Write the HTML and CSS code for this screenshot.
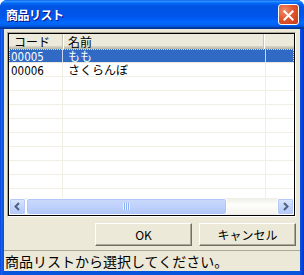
FILE: index.html
```html
<!DOCTYPE html>
<html lang="ja">
<head>
  <meta charset="UTF-8" />
  <title>商品リスト</title>
  <link rel="stylesheet" href="styles.css">
</head>
<body>
  <div class="window">
    <div class="titlebar">
      <span class="title">商品リスト</span>
      <span class="close">
        <svg width="21" height="21" viewBox="0 0 21 21">
          <path d="M6 6 L15 15 M15 6 L6 15" stroke="#fff" stroke-width="2.2" stroke-linecap="square" />
        </svg>
      </span>
    </div>

    <div class="client">
      <!-- list view -->
      <div class="listview">
        <div class="list-inner">
          <div class="grid">
            <div class="row head">
              <div class="cell c1">コード</div>
              <div class="cell c2">名前</div>
              <div class="cell c3"></div>
            </div>
            <div class="row selected">
              <div class="cell c1"><span class="num">00005</span></div>
              <div class="cell c2">もも</div>
              <div class="cell c3"></div>
            </div>
            <div class="row">
              <div class="cell c1"><span class="num">00006</span></div>
              <div class="cell c2">さくらんぼ</div>
              <div class="cell c3"></div>
            </div>
            <div class="row"><div class="cell c1"></div><div class="cell c2"></div><div class="cell c3"></div></div>
            <div class="row"><div class="cell c1"></div><div class="cell c2"></div><div class="cell c3"></div></div>
            <div class="row"><div class="cell c1"></div><div class="cell c2"></div><div class="cell c3"></div></div>
            <div class="row"><div class="cell c1"></div><div class="cell c2"></div><div class="cell c3"></div></div>
            <div class="row"><div class="cell c1"></div><div class="cell c2"></div><div class="cell c3"></div></div>
            <div class="row"><div class="cell c1"></div><div class="cell c2"></div><div class="cell c3"></div></div>
            <div class="row"><div class="cell c1"></div><div class="cell c2"></div><div class="cell c3"></div></div>
            <div class="row"><div class="cell c1"></div><div class="cell c2"></div><div class="cell c3"></div></div>
            <div class="row"><div class="cell c1"></div><div class="cell c2"></div><div class="cell c3"></div></div>
          </div>

          <div class="hscroll">
            <span class="sbtn">
              <svg width="15" height="15" viewBox="0 0 15 15"><path d="M9 4 L5.5 7.5 L9 11" fill="none" stroke="#4D6185" stroke-width="2" /></svg>
            </span>
            <span class="track">
              <span class="thumb"><span class="grip"></span></span>
            </span>
            <span class="sbtn">
              <svg width="15" height="15" viewBox="0 0 15 15"><path d="M6 4 L9.5 7.5 L6 11" fill="none" stroke="#4D6185" stroke-width="2" /></svg>
            </span>
          </div>
        </div>
      </div>

      <div class="buttons">
        <span class="btn">OK</span>
        <span class="btn">キャンセル</span>
      </div>

      <div class="status">商品リストから選択してください。</div>
    </div>
  </div>
</body>
</html>
```

FILE: styles.css
```css
body {
  margin: 0;
  background: #fff;
  font: 12px "Noto Sans CJK JP", "Liberation Sans", sans-serif;
}

.window {
  width: 304px;
  height: 275px;
  box-sizing: border-box;
  display: flex;
  flex-direction: column;
  background: linear-gradient(to right, #0831D9 0, #166AEE 1px, #0855DD 3px, #0855DD 300px, #0831D9 304px);
  padding: 0 4px 4px;
  border-radius: 7px 7px 0 0;
}

/* title bar */
.titlebar {
  height: 30px;
  margin: 0 -4px;
  padding: 0 5px 0 6px;
  display: flex;
  align-items: center;
  justify-content: space-between;
  border-radius: 7px 7px 0 0;
  background: linear-gradient(
    to bottom,
    #0058EE 0%,
    #3593FF 4%,
    #288EFF 6%,
    #127DFF 8%,
    #036FFC 10%,
    #0262EE 14%,
    #0057E5 20%,
    #0054E3 24%,
    #0055EB 56%,
    #005BF5 66%,
    #026AFE 76%,
    #0062EF 86%,
    #0052D6 92%,
    #0040AB 94%,
    #003092 100%
  );
}

.title {
  color: #fff;
  font-weight: bold;
  font-size: 12px;
  letter-spacing: -0.5px;
  text-shadow: 1px 1px 0 #0F1089;
}

.close {
  width: 21px;
  height: 21px;
  box-sizing: border-box;
  border: 1px solid #fff;
  border-radius: 3px;
  background: radial-gradient(circle at 30% 30%, #F0906E 0%, #E0572F 45%, #C43A15 100%);
  display: flex;
}

/* client area */
.client {
  flex: 1;
  background: #ECE9D8;
  display: flex;
  flex-direction: column;
  padding: 3px 4px 0 3px;
}

.listview {
  height: 185px;
  box-sizing: border-box;
  border: 1px solid;
  border-color: #ACA899 #fff #fff #ACA899;
}

.list-inner {
  height: 100%;
  box-sizing: border-box;
  border: 1px solid #000;
  background: #fff;
  display: flex;
  flex-direction: column;
}

.grid {
  flex: 1;
  overflow: hidden;
}

.row {
  display: flex;
  height: 13px;
  line-height: 13px;
  border-bottom: 1px solid #F1EFE2;
}

.cell {
  padding-left: 2px;
  border-right: 1px solid #F1EFE2;
  white-space: nowrap;
}

.c1 { width: 51px; }
.c2 { width: 197px; padding-left: 5px; }
.c3 { flex: 1; border-right: 0; }

.num {
  font-family: "DejaVu Sans Condensed", "Liberation Sans Narrow", sans-serif;
  font-size: 11.5px;
}

.row.head {
  height: 15px;
  line-height: 15px;
  background: #EBEADB;
  border-bottom: 0;
  box-shadow: inset 0 -1px 0 #C1BCA7, inset 0 -2px 0 #CBC7B8, inset 0 -3px 0 #D6D2C2;
}

.row.head .cell {
  border-right: 1px solid #C7C5B2;
  box-shadow: 1px 0 0 #fff;
  padding-left: 5px;
}

.row.head .c1 { width: 48px; }
.row.head .c2 { width: 195px; }
.row.head .c3 { border-right: 0; box-shadow: none; }

.row.selected {
  background: #316AC5;
  color: #fff;
  outline: 1px dotted #D7E1F2;
  outline-offset: -1px;
}

.row.selected .cell {
  border-right-color: #C9D6EE;
}

/* horizontal scrollbar */
.hscroll {
  height: 17px;
  display: flex;
  background: linear-gradient(to bottom, #EEEDE5, #FEFEFB 40%, #F3F1EC);
}

.sbtn {
  width: 17px;
  height: 17px;
  box-sizing: border-box;
  border: 1px solid #fff;
  border-radius: 2px;
  background: linear-gradient(to bottom, #DDE7FE, #C1D3FB 60%, #B4C8F6);
  box-shadow: inset 0 0 0 1px #B5CAF8;
  display: flex;
  align-items: center;
  justify-content: center;
}

.track {
  flex: 1;
  display: flex;
}

.thumb {
  width: 201px;
  box-sizing: border-box;
  border: 1px solid #fff;
  border-radius: 3px;
  background: linear-gradient(to bottom, #CBDAFC, #BCCFFB 60%, #B1C6F7);
  box-shadow: inset 0 0 0 1px #B0C6F8;
  display: flex;
  align-items: center;
  justify-content: center;
}

.grip {
  width: 7px;
  height: 7px;
  background: repeating-linear-gradient(to right, #EEF4FE 0, #EEF4FE 1px, #8CB0F8 1px, #8CB0F8 2px);
}

/* dialog buttons */
.buttons {
  display: flex;
  justify-content: flex-end;
  gap: 7px;
  margin-top: 6px;
}

.btn {
  width: 97px;
  height: 23px;
  box-sizing: border-box;
  border: 1px solid;
  border-color: #fff #716F64 #716F64 #fff;
  box-shadow: inset -1px -1px 0 #ACA899;
  background: #ECE9D8;
  display: flex;
  align-items: center;
  justify-content: center;
  font-size: 12px;
}

/* status bar */
.status {
  margin: 4px -4px 0 -3px;
  flex: 1;
  border-top: 1px solid #ACA899;
  padding-left: 1px;
  font-size: 14px;
  line-height: 20px;
  white-space: nowrap;
}
```
